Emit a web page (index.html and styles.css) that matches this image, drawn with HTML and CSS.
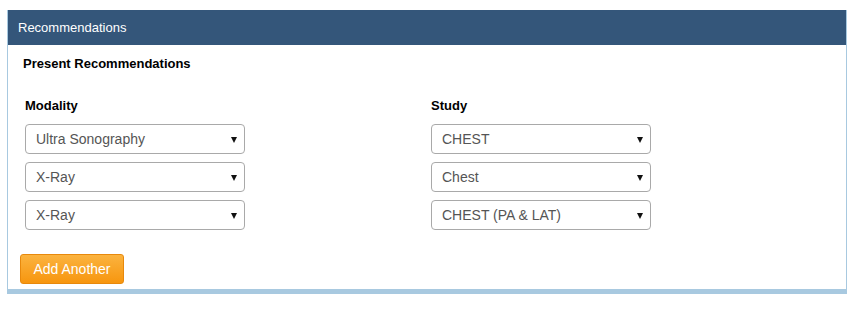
FILE: index.html
```html
<!DOCTYPE html>
<html lang="en">
<head>
  <meta charset="UTF-8" />
  <title>Recommendations</title>
  <link rel="stylesheet" href="styles.css">
</head>
<body>
  <div class="panel">
    <div class="panel-heading">Recommendations</div>
    <div class="panel-body">
      <h4>Present Recommendations</h4>

      <div class="rec-grid">
        <label>Modality</label>
        <label>Study</label>

        <div class="select-wrap">
          <select>
            <option>Ultra Sonography</option>
            <option>X-Ray</option>
          </select>
        </div>
        <div class="select-wrap">
          <select>
            <option>CHEST</option>
          </select>
        </div>

        <div class="select-wrap">
          <select>
            <option>X-Ray</option>
            <option>Ultra Sonography</option>
          </select>
        </div>
        <div class="select-wrap">
          <select>
            <option>Chest</option>
          </select>
        </div>

        <div class="select-wrap">
          <select>
            <option>X-Ray</option>
            <option>Ultra Sonography</option>
          </select>
        </div>
        <div class="select-wrap">
          <select>
            <option>CHEST (PA &amp; LAT)</option>
          </select>
        </div>
      </div>

      <button class="btn-add">Add Another</button>
    </div>
  </div>
</body>
</html>
```

FILE: styles.css
```css
* {
  margin: 0;
  padding: 0;
  box-sizing: border-box;
}

body {
  font-family: 'Liberation Sans', Arial, sans-serif;
  background: #fff;
  padding: 10px 5px 0 7px;
}

.panel {
  width: 840px;
  border: 1px solid #a8c9e0;
  border-top: none;
  border-bottom-width: 5px;
  background: #fff;
}

.panel-heading {
  background: #34567a;
  color: #fff;
  font-size: 13px;
  height: 35px;
  line-height: 35px;
  padding-left: 10px;
}

.panel-body {
  padding: 11px 12px 5px 12px;
}

.panel-body h4 {
  font-size: 13px;
  font-weight: bold;
  color: #000;
  line-height: 15px;
  margin-left: 3px;
}

.rec-grid {
  display: grid;
  grid-template-columns: 406px 220px;
  row-gap: 8px;
  padding-left: 5px;
  margin-top: 27px;
}

.rec-grid label {
  font-size: 13px;
  font-weight: bold;
  color: #000;
  line-height: 15px;
  margin-bottom: 3px;
}

.select-wrap {
  position: relative;
  width: 220px;
}

.select-wrap::after {
  content: "";
  position: absolute;
  right: 8px;
  top: 13px;
  border-left: 3px solid transparent;
  border-right: 3px solid transparent;
  border-top: 6px solid #111;
  pointer-events: none;
}

.select-wrap select {
  appearance: none;
  -webkit-appearance: none;
  width: 220px;
  height: 30px;
  border: 1px solid #a9a9a9;
  border-radius: 4px;
  background: #fff;
  color: #555;
  font-family: 'Liberation Sans', Arial, sans-serif;
  font-size: 14px;
  padding: 0 20px 0 10px;
}

.btn-add {
  margin-top: 24px;
  width: 104px;
  height: 30px;
  border: 1px solid #e8890c;
  border-radius: 3px;
  background: linear-gradient(to bottom, #fbb33f, #f7960f);
  color: #fff;
  font-family: 'Liberation Sans', Arial, sans-serif;
  font-size: 14px;
}
```
